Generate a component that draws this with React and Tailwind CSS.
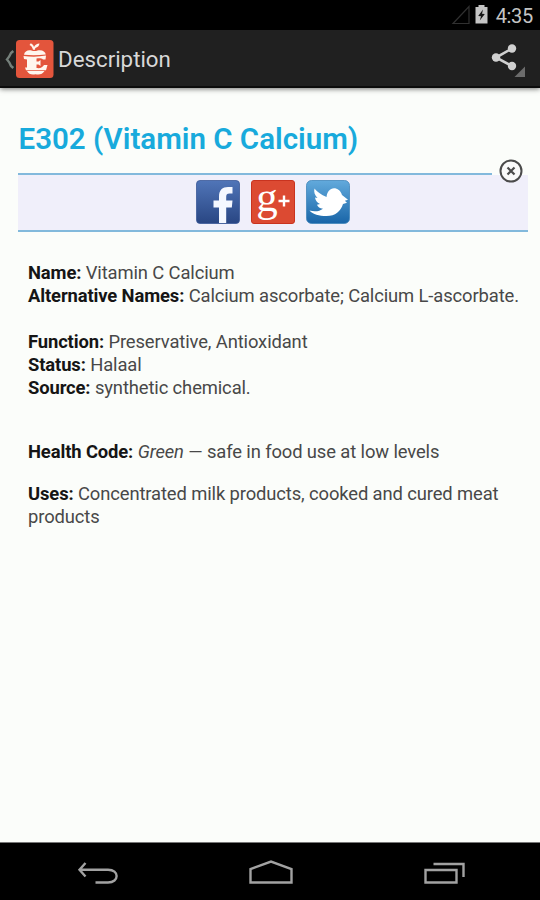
import React from "react";

function StatusBar() {
  return (
    <div className="flex h-[30px] items-center justify-end bg-black pr-[7px]">
      <svg className="mr-[5px] h-5 w-5" viewBox="0 0 20 20" fill="none" stroke="#303030" strokeWidth="1.2">
        <path d="M3 18.500 L19 1.500 V18.500 Z" />
      </svg>
      <svg className="mr-[8px] h-5 w-[13px]" viewBox="0 0 13 20">
        <path d="M3.500 0 H9.500 V2 H12.500 V18.500 H0.500 V2 H3.500 Z" fill="#c4c4c4" />
        <path d="M8 4.500 L3.200 11 L6 11.300 L4.800 15.500 L9.800 9 L7 8.700 Z" fill="#161616" />
      </svg>
      <span className="mt-[2px] h-6 text-[20px] leading-6 tracking-[-0.3px] text-[#c4c4c4]">4:35</span>
    </div>
  );
}

function AppLogo() {
  return (
    <svg className="mt-[2px] ml-px h-[38px] w-[38px]" viewBox="0 0 38 38">
      <rect width="37.500" height="38" rx="3.500" fill="#e3553c" />
      <g fill="#fff6ee">
        <path d="M17 9.800 C16.500 7.300 15.300 6 13.500 5 L14.800 3.300 C16.500 4 17.500 5.500 18 7 C19 5 21 3.600 23.500 3.600 C23 6 21.800 7.500 19.300 7.900 L19 9.800 Z" />
        <path d="M8 14.800 C8.500 11.300 12 9.600 15.500 10.500 Q18.500 11.500 21.500 10.500 C26 9.600 29.300 11.300 29.800 14.500 Q19 15.800 8 14.800 Z" />
        <path d="M7.500 15.900 Q19 17.500 30 15.600 L29.500 19.500 H27 C25.500 18.300 24 18.200 20.500 18.400 V21.500 H22.500 L24.500 20 V26 L22.500 24.500 H20.500 V28 C24.500 28.500 26.500 27.500 28 25 H31.500 L30 30.300 H10 L9 27.500 H11 V19.500 L8 19 Z" />
        <path d="M11 31 H28.500 C26.500 34.300 23.500 35 19.500 34.200 C16 35 12.500 34.300 11 31 Z" />
      </g>
    </svg>
  );
}

function ActionBar() {
  return (
    <header className="flex h-[58px] items-center border-b-2 border-[#0c0c0c] bg-[#202020] pl-[5px] shadow-[0_1px_5px_rgba(0,0,0,0.55)]">
      <svg className="mt-px h-[22px] w-[10px]" viewBox="0 0 10 22" fill="none" stroke="#75807b" strokeWidth="2.400">
        <path d="M8.300 3 L6 5 Q4.500 8.500 2 11.500 Q4.500 14 6 18 L8.300 20" />
      </svg>
      <AppLogo />
      <h1 className="mt-[2px] ml-[4px] text-[22.300px] leading-7 text-[#d8d8d8]">Description</h1>
      <svg className="mr-[14px] ml-auto h-10 w-9" viewBox="0 0 36 40">
        <path d="M22 10.500 L6 19.500 L22 28" fill="none" stroke="#d0d0d0" strokeWidth="2.600" />
        <circle cx="22" cy="10.500" r="4.200" fill="#d0d0d0" />
        <circle cx="6" cy="19.500" r="4.200" fill="#d0d0d0" />
        <circle cx="22" cy="28" r="4.200" fill="#d0d0d0" />
        <path d="M35 28.500 V39 H24.500 Z" fill="#6c6c6c" />
      </svg>
    </header>
  );
}

function FacebookIcon() {
  return (
    <svg className="h-11 w-11" viewBox="0 0 44 44">
      <defs>
        <linearGradient id="fb" x1="0" y1="0" x2="0" y2="1">
          <stop offset="0" stopColor="#5075b8" />
          <stop offset="1" stopColor="#294683" />
        </linearGradient>
      </defs>
      <rect x="0.500" y="0.500" width="43" height="43" rx="3.500" fill="url(#fb)" stroke="#3b5998" strokeWidth="0.800" />
      <path d="M23 43 V27.500 H17.500 V20.500 H23 V16.500 C23 10 26.500 7 32 7 H36.500 V13.500 H33.500 C31 13.500 30.200 14.500 30.200 17 V20.500 H36.500 L35.800 27.500 H30.200 V43 Z" fill="#f5f8ff" />
    </svg>
  );
}

function GooglePlusIcon() {
  return (
    <div className="flex h-11 w-11 items-center justify-center rounded-[3px] border border-[#c9331f] bg-[#dc4a32] text-white">
      <span className="-mt-[10px] h-[44px] font-['Liberation_Serif',serif] text-[43px] leading-[44px]">g</span>
      <svg className="-mt-[2px] h-3 w-3" viewBox="0 0 12 12" fill="none" stroke="white" strokeWidth="2.400">
        <path d="M6 0.500 V11.500 M0.500 6 H11.500" />
      </svg>
    </div>
  );
}

function TwitterIcon() {
  return (
    <svg className="h-11 w-11" viewBox="0 0 44 44">
      <defs>
        <linearGradient id="tw" x1="0" y1="0" x2="0" y2="1">
          <stop offset="0" stopColor="#62aadc" />
          <stop offset="1" stopColor="#1965a8" />
        </linearGradient>
      </defs>
      <rect x="0.500" y="0.500" width="43" height="43" rx="5" fill="url(#tw)" stroke="#4386ba" strokeWidth="0.800" />
      <path d="M8.500 8.500 C12 12.500 15 14.500 20.500 17 C21 12 24 8.300 28 8.300 C31.500 8.300 34.500 10.500 36 15 L42 19.800 L38.800 20.800 L41 22.800 L37 24 C34.500 31.500 29.500 36 20.500 36 C13 36 7 34.500 3.500 30.500 C8.500 32 13.500 31.500 17 28.800 C13.500 28.300 12 27 11 24.800 L14 24 C10.800 22.500 9.500 20.500 9 17.500 L11.500 18 C8.800 15 7.500 12 8.500 8.500 Z" fill="#fff" />
    </svg>
  );
}

function ShareStrip() {
  return (
    <section className="relative ml-[18px] h-[60px] w-[510px]">
      <div className="h-[2px] w-[474px] bg-[#82b9dc]" />
      <div className="flex h-[57px] justify-center gap-[11px] border-b-2 border-[#82b9dc] bg-[#f0effa] pt-[5px]">
        <FacebookIcon />
        <GooglePlusIcon />
        <TwitterIcon />
      </div>
      <svg className="absolute top-[-15px] right-[4px] h-[26px] w-[26px]" viewBox="0 0 26 26" fill="none" stroke="#4b4b4b">
        <circle cx="13" cy="13" r="10.500" strokeWidth="2" fill="#fafafa" />
        <path d="M9.500 9.500 L16.500 16.500 M16.500 9.500 L9.500 16.500" strokeWidth="2.200" />
      </svg>
    </section>
  );
}

function Field({ label, children }) {
  return (
    <p>
      <b className="font-bold text-[#151515]">{`${label}:`}</b> {children}
    </p>
  );
}

function Details() {
  return (
    <main className="ml-[28px] w-[500px] pt-[28px] text-[18.400px] leading-[23px] tracking-[-0.120px] text-[#484848]">
      <Field label="Name">Vitamin C Calcium</Field>
      <Field label="Alternative Names">Calcium ascorbate; Calcium L-ascorbate.</Field>
      <div className="mt-[23px]">
        <Field label="Function">Preservative, Antioxidant</Field>
        <Field label="Status">Halaal</Field>
        <Field label="Source">synthetic chemical.</Field>
      </div>
      <div className="mt-[41px]">
        <Field label="Health Code">
          <i>Green</i> — safe in food use at low levels
        </Field>
      </div>
      <div className="mt-[19px]">
        <Field label="Uses">Concentrated milk products, cooked and cured meat products</Field>
      </div>
    </main>
  );
}

function NavigationBar() {
  return (
    <nav className="mt-auto flex h-[58px] items-center border-t border-[#777] bg-black pt-[3px]">
      <svg className="ml-[75px] h-[30px] w-[44px]" viewBox="0 0 44 30" fill="none" stroke="#a2a2a2" strokeWidth="2.400">
        <path d="M10.500 5 L4.500 11.700 L10.500 18.500 M4.500 11.700 H33 C44.500 11.700 44.500 24.500 33 24.500 H20.500" />
      </svg>
      <svg className="ml-[129px] h-[30px] w-[46px]" viewBox="0 0 46 30" fill="none" stroke="#a2a2a2" strokeWidth="2.400">
        <path d="M2.500 24.500 V11 L23 3.500 L43.500 11 V24.500 Z" />
      </svg>
      <svg className="ml-[129px] h-[30px] w-[44px]" viewBox="0 0 44 30" fill="none" stroke="#a2a2a2" strokeWidth="2.400">
        <path d="M2.500 12 H33.500 V24.500 H2.500 Z M10.500 6 H40.500 V19" />
      </svg>
    </nav>
  );
}

export default function App() {
  return (
    <div className="flex h-[900px] w-[540px] flex-col overflow-hidden bg-[#fbfdfa] font-['Roboto',sans-serif]">
      <StatusBar />
      <ActionBar />
      <h2 className="mt-[33px] mb-[33px] ml-[18.500px] h-[19px] text-[29.500px] leading-[37px] font-semibold whitespace-nowrap text-[#18aadc]">
        E302 (Vitamin C Calcium)
      </h2>
      <ShareStrip />
      <Details />
      <NavigationBar />
    </div>
  );
}
